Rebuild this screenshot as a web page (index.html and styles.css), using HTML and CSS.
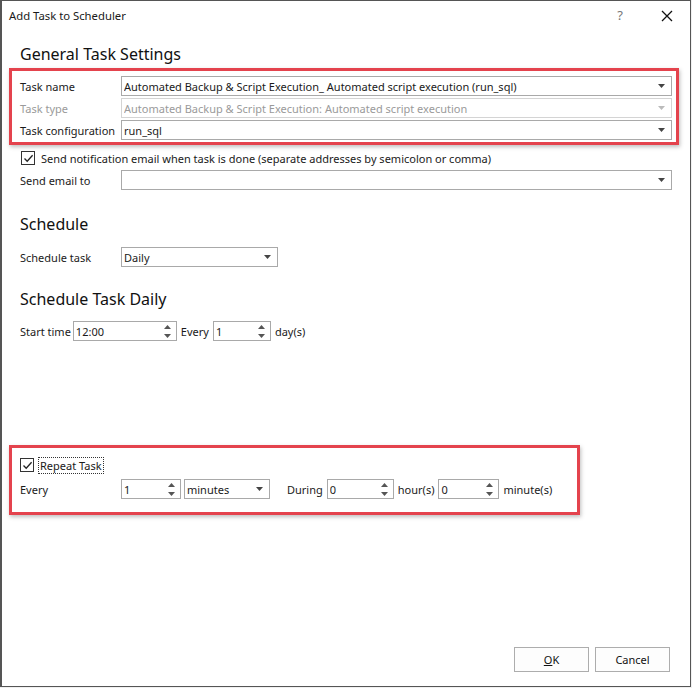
FILE: index.html
```html
<!DOCTYPE html>
<html lang="en">
<head>
    <meta charset="UTF-8">
    <title>Add Task to Scheduler</title>
    <link rel="stylesheet" href="styles.css">
</head>
<body>
    <div class="window">
        <div class="titlebar">
            <span class="title">Add Task to Scheduler</span>
            <span class="help">?</span>
            <svg class="close" width="12" height="12" viewBox="0 0 12 12"><path d="M1 1 L11 11 M11 1 L1 11" stroke="#111" stroke-width="1.3"/></svg>
        </div>

        <div class="content">
            <h2 class="heading first">General Task Settings</h2>

            <div class="highlight general">
                <div class="row">
                    <label class="label">Task name</label>
                    <div class="combo wide">
                        <span>Automated Backup &amp; Script Execution_ Automated script execution (run_sql)</span>
                        <svg class="arrow" width="7" height="4" viewBox="0 0 7 4"><path d="M0 0 H7 L3.5 4 Z" fill="#444"/></svg>
                    </div>
                </div>
                <div class="row">
                    <label class="label disabled">Task type</label>
                    <div class="combo wide off">
                        <span>Automated Backup &amp; Script Execution: Automated script execution</span>
                        <svg class="arrow" width="7" height="4" viewBox="0 0 7 4"><path d="M0 0 H7 L3.5 4 Z" fill="#bbb"/></svg>
                    </div>
                </div>
                <div class="row last">
                    <label class="label">Task configuration</label>
                    <div class="combo wide">
                        <span>run_sql</span>
                        <svg class="arrow" width="7" height="4" viewBox="0 0 7 4"><path d="M0 0 H7 L3.5 4 Z" fill="#444"/></svg>
                    </div>
                </div>
            </div>

            <div class="check-row notify">
                <span class="checkbox"><svg width="11" height="11" viewBox="0 0 11 11"><path d="M1.5 5.5 L4.2 8.3 L9.6 2.2" fill="none" stroke="#222" stroke-width="1.3"/></svg></span>
                <span>Send notification email when task is done (separate addresses by semicolon or comma)</span>
            </div>

            <div class="row email">
                <label class="label">Send email to</label>
                <div class="combo wide">
                    <span></span>
                    <svg class="arrow" width="7" height="4" viewBox="0 0 7 4"><path d="M0 0 H7 L3.5 4 Z" fill="#444"/></svg>
                </div>
            </div>

            <h2 class="heading schedule">Schedule</h2>

            <div class="row sched-task">
                <label class="label">Schedule task</label>
                <div class="combo daily">
                    <span>Daily</span>
                    <svg class="arrow" width="7" height="4" viewBox="0 0 7 4"><path d="M0 0 H7 L3.5 4 Z" fill="#444"/></svg>
                </div>
            </div>

            <h2 class="heading daily-head">Schedule Task Daily</h2>

            <div class="row inline start">
                <span class="text first">Start time</span>
                <div class="spin time">
                    <span>12:00</span>
                    <svg class="updown" width="7" height="13" viewBox="0 0 7 13"><path d="M0 4 L3.5 0 L7 4 Z M0 9 L3.5 13 L7 9 Z" fill="#555"/></svg>
                </div>
                <span class="text">Every</span>
                <div class="spin days">
                    <span>1</span>
                    <svg class="updown" width="7" height="13" viewBox="0 0 7 13"><path d="M0 4 L3.5 0 L7 4 Z M0 9 L3.5 13 L7 9 Z" fill="#555"/></svg>
                </div>
                <span class="text">day(s)</span>
            </div>

            <div class="highlight repeat">
                <div class="check-row">
                    <span class="checkbox"><svg width="11" height="11" viewBox="0 0 11 11"><path d="M1.5 5.5 L4.2 8.3 L9.6 2.2" fill="none" stroke="#222" stroke-width="1.3"/></svg></span>
                    <span class="focus">Repeat Task</span>
                </div>
                <div class="row inline every">
                    <label class="label">Every</label>
                    <div class="spin count">
                        <span>1</span>
                        <svg class="updown" width="7" height="13" viewBox="0 0 7 13"><path d="M0 4 L3.5 0 L7 4 Z M0 9 L3.5 13 L7 9 Z" fill="#555"/></svg>
                    </div>
                    <div class="combo unit">
                        <span>minutes</span>
                        <svg class="arrow" width="7" height="4" viewBox="0 0 7 4"><path d="M0 0 H7 L3.5 4 Z" fill="#444"/></svg>
                    </div>
                    <span class="text during">During</span>
                    <div class="spin hours">
                        <span>0</span>
                        <svg class="updown" width="7" height="13" viewBox="0 0 7 13"><path d="M0 4 L3.5 0 L7 4 Z M0 9 L3.5 13 L7 9 Z" fill="#555"/></svg>
                    </div>
                    <span class="text">hour(s)</span>
                    <div class="spin mins">
                        <span>0</span>
                        <svg class="updown" width="7" height="13" viewBox="0 0 7 13"><path d="M0 4 L3.5 0 L7 4 Z M0 9 L3.5 13 L7 9 Z" fill="#555"/></svg>
                    </div>
                    <span class="text">minute(s)</span>
                </div>
            </div>
        </div>

        <div class="buttons">
            <button class="btn"><u>O</u>K</button>
            <button class="btn">Cancel</button>
        </div>
    </div>
</body>
</html>
```

FILE: styles.css
```css
body {
    margin: 0;
    background: #f0f0f0;
    font-family: 'Noto Sans', 'Open Sans', sans-serif;
    font-size: 11px;
    color: #1a1a1a;
}

.window {
    width: 688px;
    height: 685px;
    background: #fff;
    border: 1px solid #555;
    border-left-width: 2px;
    display: flex;
    flex-direction: column;
}

.titlebar {
    height: 30px;
    display: flex;
    align-items: center;
    padding-left: 7px;
    font-size: 11.3px;
}

.title {
    flex: 1;
    margin-top: -2px;
}

.help {
    color: #777;
    font-size: 13px;
    margin-right: 38px;
    margin-top: -2px;
}

.close {
    margin-right: 17px;
    margin-top: -1px;
}

.content {
    flex: 1;
}

.heading {
    font-size: 16px;
    font-weight: normal;
    margin: 0 0 0 18px;
    height: 24px;
    line-height: 24px;
    color: #111;
}

.heading.first {
    margin-top: 11px;
}

.highlight {
    border: 3px solid #e4434d;
    box-shadow: 1px 2px 4px rgba(0, 0, 0, 0.25);
    margin-left: 7px;
}

.highlight.general {
    width: 664px;
    margin-top: 2px;
    padding: 5px 0 1px 0;
}

.row {
    display: flex;
    align-items: center;
    height: 20px;
    margin-bottom: 2px;
}

.row.last {
    margin-bottom: 1px;
}

.highlight .row .label,
.highlight .check-row {
    margin-left: 8px;
}

.label {
    width: 101px;
    flex-shrink: 0;
}

.content > .row .label {
    margin-left: 18px;
}

.label.disabled {
    color: #9a9a9a;
}

.combo,
.spin {
    box-sizing: border-box;
    height: 20px;
    border: 1px solid #a9a9a9;
    background: #fff;
    display: flex;
    align-items: center;
    padding: 0 6px 0 2px;
}

.combo span,
.spin span {
    flex: 1;
    white-space: nowrap;
    overflow: hidden;
}

.combo.wide {
    width: 551px;
}

.combo.off {
    border-color: #d4d4d4;
    color: #9a9a9a;
}

.combo.daily {
    width: 157px;
}

.arrow {
    flex-shrink: 0;
    margin-left: 4px;
}

.check-row {
    display: flex;
    align-items: center;
    height: 14px;
    margin-left: 19px;
}

.check-row.notify {
    margin-top: 6px;
}

.checkbox {
    box-sizing: border-box;
    width: 14px;
    height: 14px;
    border: 1px solid #333;
    display: flex;
    align-items: center;
    justify-content: center;
    margin-right: 6px;
}

.focus {
    outline: 1px dotted #333;
    padding: 0 1px;
    margin-left: -1px;
}

.row.email {
    margin-top: 5px;
}

.heading.schedule {
    margin-top: 22px;
}

.row.sched-task {
    margin-top: 11px;
}

.heading.daily-head {
    margin-top: 20px;
}

.row.inline .text {
    margin: 0 4px;
}

.row.start {
    margin-top: 10px;
    padding-left: 18px;
}

.row.start .text.first {
    margin: 0 2px 0 0;
}

.spin {
    padding-right: 5px;
}

.updown {
    flex-shrink: 0;
}

.spin.time {
    width: 104px;
}

.spin.days {
    width: 58px;
}

.highlight.repeat {
    width: 565px;
    height: 54px;
    margin-top: 104px;
    padding-top: 10px;
}

.row.every {
    margin-top: 7px;
}

.spin.count {
    width: 60px;
    margin-right: 3px;
}

.combo.unit {
    width: 86px;
}

.text.during {
    margin-left: 17px !important;
}

.spin.hours {
    width: 67px;
}

.spin.mins {
    width: 61px;
}

.buttons {
    display: flex;
    justify-content: flex-end;
    gap: 6px;
    padding: 0 20px 14px 0;
}

.btn {
    width: 75px;
    height: 25px;
    border: 1px solid #adadad;
    background: #fdfdfd;
    font-family: 'Noto Sans', 'Open Sans', sans-serif;
    font-size: 11px;
    color: #111;
}
```
